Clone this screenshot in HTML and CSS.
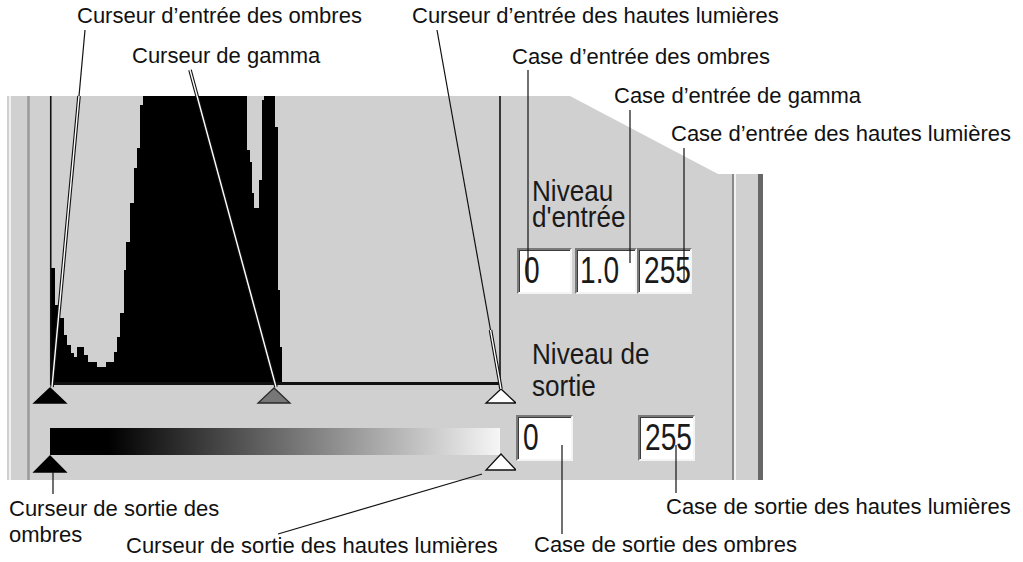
FILE: index.html
```html
<!DOCTYPE html>
<html lang="fr">
	<head>
		<meta charset="utf-8" />
		<link rel="stylesheet" href="styles.css">
	</head>

	<body>
		<div class="figure">
			<!-- fenêtre des niveaux -->
			<div class="panel">
				<svg class="scale" viewBox="7 96 509 384" width="509" height="384">
					<defs>
						<linearGradient id="ramp" x1="0" x2="1" y1="0" y2="0">
							<stop offset="0" stop-color="#000" />
							<stop offset="0.13" stop-color="#000" />
							<stop offset="1" stop-color="#f6f6f6" />
						</linearGradient>
					</defs>
					<line class="rim" x1="10" y1="96" x2="10" y2="480" />
					<line class="groove" x1="28.5" y1="96" x2="28.5" y2="480" />

					<polygon class="hist" points="51,384 51,268 55,268 55,305 58,305 58,318 64,318 64,335 67,335 67,345 71,345 71,353 74,353 74,357 77,357 77,347 84,347 84,355 88,355 88,362 97,362 97,367 106,367 106,362 114,362 114,352 117,352 117,337 120,337 120,313 124,313 124,270 126,270 126,242 130,242 130,203 134,203 134,168 137,168 137,148 140,148 140,105 143,105 143,96 247,96 247,150 250,150 250,162 252,162 252,193 254,193 254,208 259,208 259,180 262,180 262,100 264,100 264,96 275,96 275,127 278,127 278,290 280,290 280,347 282,347 282,384" />
					<line class="frame" x1="50.75" y1="96" x2="50.75" y2="385" />
					<line class="frame" x1="500" y1="96" x2="500" y2="385" />
					<rect class="base" x="50" y="382" width="451" height="3" />

					<polygon class="knob dark" points="50,388 34,403 66,403" />
					<polygon class="knob mid" points="274,388 258,403 290,403" />
					<polygon class="knob light" points="501,389 486,403 516,403" />

					<rect x="50" y="428" width="450" height="27" fill="url(#ramp)" />
					<polygon class="knob dark" points="50,456 34,472 66,472" />
					<polygon class="knob light" points="501,454 486,470 516,470" />
				</svg>

				<div class="levels">
					<div class="level-title">Niveau<br />d'entrée</div>
					<div class="boxes">
						<span class="box"><span class="num">0</span></span>
						<span class="box gamma"><span class="num">1.0</span></span>
						<span class="box"><span class="num">255</span></span>
					</div>
					<div class="level-title out">Niveau de<br />sortie</div>
					<div class="boxes out">
						<span class="box"><span class="num">0</span></span>
						<span class="box"><span class="num">255</span></span>
					</div>
				</div>
				<div class="edge"></div>
			</div>

			<!-- traits de rappel -->
			<svg class="leads" viewBox="0 0 1023 562" width="1023" height="562">
				<line class="twin-out" x1="79" y1="96" x2="52" y2="387" />
				<line class="twin-in" x1="79" y1="96" x2="52" y2="387" />
				<line class="twin-out" x1="190" y1="70" x2="276" y2="387" />
				<line class="twin-in" x1="190" y1="70" x2="276" y2="387" />
				<line class="twin-out" x1="490.5" y1="330" x2="501" y2="389" />
				<line class="twin-in" x1="490.5" y1="330" x2="501" y2="389" />

				<line class="lead" x1="85" y1="30" x2="79" y2="96" />
				<line class="lead" x1="437" y1="30" x2="490.5" y2="330" />
				<line class="lead" x1="528" y1="70" x2="528" y2="280" />
				<line class="lead" x1="630" y1="110" x2="630" y2="263" />
				<line class="lead" x1="684" y1="148" x2="684" y2="280" />

				<line class="lead" x1="53" y1="472" x2="53" y2="494" />
				<line class="lead" x1="482" y1="474" x2="278" y2="534" />
				<line class="lead" x1="562" y1="445" x2="562" y2="534" />
				<line class="lead" x1="676" y1="445" x2="676" y2="493" />
			</svg>

			<span class="note in-shadow">Curseur d’entrée des ombres</span>
			<span class="note in-gamma">Curseur de gamma</span>
			<span class="note in-high">Curseur d’entrée des hautes lumières</span>
			<span class="note box-shadow">Case d’entrée des ombres</span>
			<span class="note box-gamma">Case d’entrée de gamma</span>
			<span class="note box-high">Case d’entrée des hautes lumières</span>
			<span class="note out-shadow">Curseur de sortie des<br />ombres</span>
			<span class="note out-high">Curseur de sortie des hautes lumières</span>
			<span class="note outbox-shadow">Case de sortie des ombres</span>
			<span class="note outbox-high">Case de sortie des hautes lumières</span>
		</div>
	</body>
</html>
```

FILE: styles.css
```css
body {
    margin: 0;
    background-color: #fff;
    font-family: "Liberation Sans", Arial, sans-serif;
    color: #111;
}

.figure {
    position: relative;
    width: 1023px;
    height: 562px;
    padding: 96px 0 0 7px;
    box-sizing: border-box;
}

/* fenêtre coupée en biais en haut à droite */
.panel {
    display: flex;
    width: 756px;
    height: 384px;
    box-sizing: border-box;
    background-color: #d0d0d0;
    border-right: 5px solid #676767;
    clip-path: polygon(0 0, 563px 0, 711px 78px, 100% 78px, 100% 100%, 0 100%);
}

.scale { flex: none; display: block; }

.rim { stroke: #f0f0f0; stroke-width: 2; }
.groove { stroke: #9a9a9a; stroke-width: 2.5; }
.hist { fill: #000; }
.frame { stroke: #111; stroke-width: 1.6; }
.base { fill: #111; }

.knob { stroke-width: 1.3; stroke-linejoin: miter; }
.knob.dark { fill: #000; stroke: #000; }
.knob.mid { fill: #777; stroke: #2a2a2a; }
.knob.light { fill: #fff; stroke: #111; }

.levels {
    flex: none;
    width: 216px;
    display: flex;
    flex-direction: column;
    padding-top: 82px;
    box-sizing: border-box;
}

.level-title {
    margin-left: 16px;
    font-size: 30px;
    line-height: 26px;
    color: #1a1a1a;
    transform: scaleX(.87);
    transform-origin: 0 0;
    white-space: nowrap;
}

.level-title.out {
    margin-top: 44px;
    line-height: 32px;
}

.boxes {
    display: flex;
    margin: 18px 0 0 1px;
}

.boxes.out {
    margin: 13px 0 0 0;
    gap: 65px;
}

.box {
    width: 55px;
    height: 46px;
    box-sizing: border-box;
    padding: 1px 0 0 5px;
    background-color: #fff;
    border: 2px solid;
    border-color: #7a7a7a #f4f4f4 #f4f4f4 #7a7a7a;
    box-shadow: inset 1px 1px 0 #3a3a3a;
    overflow: hidden;
}

.boxes.out .box { width: 57px; }

.box.gamma {
    width: 62px;
    margin-left: 3px;
    padding-left: 3px;
}

.num {
    display: inline-block;
    font-size: 37px;
    line-height: 40px;
    color: #1a1a1a;
    transform: scaleX(.76);
    transform-origin: 0 0;
}

.edge {
    flex: 1;
    border-left: 2px solid #888;
    box-shadow: inset 2px 0 0 #f2f2f2;
}

/* traits de rappel */
.leads {
    position: absolute;
    left: 0;
    top: 0;
    pointer-events: none;
}

.lead { stroke: #111; stroke-width: 1.2; }
.twin-out { stroke: #111; stroke-width: 3.6; }
.twin-in { stroke: #fff; stroke-width: 1.4; }

/* légendes */
.note {
    position: absolute;
    font-size: 22px;
    line-height: 22px;
    white-space: nowrap;
}

.in-shadow { left: 77px; top: 5px; }
.in-gamma { left: 132px; top: 45px; }
.in-high { left: 412px; top: 5px; }
.box-shadow { left: 512px; top: 46px; }
.box-gamma { left: 614px; top: 85px; }
.box-high { left: 671px; top: 123px; }
.out-shadow { left: 9px; top: 496px; line-height: 26px; }
.out-high { left: 126px; top: 535px; }
.outbox-shadow { left: 534px; top: 534px; }
.outbox-high { left: 666px; top: 496px; }
```
